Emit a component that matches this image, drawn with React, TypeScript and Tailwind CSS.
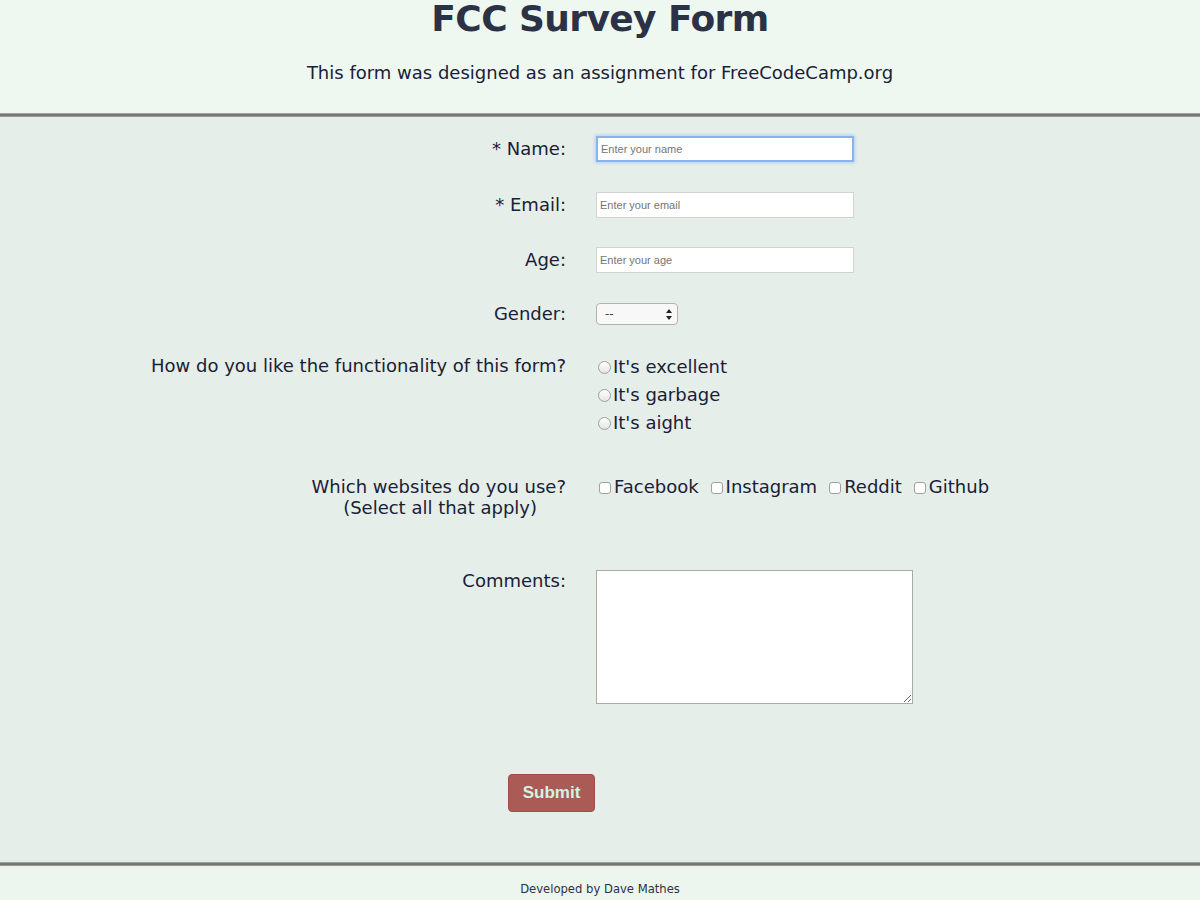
import React from "react";

const font = { fontFamily: '"DejaVu Sans", Verdana, sans-serif' };

function Row({ label, children, labelClass = "" }: { label: React.ReactNode; children: React.ReactNode; labelClass?: string }) {
  return (
    <div className="flex items-start">
      <div className={`w-[566px] shrink-0 text-right ${labelClass}`}>{label}</div>
      <div className="ml-[30px]">{children}</div>
    </div>
  );
}

function TextInput({ placeholder, focused }: { placeholder: string; focused?: boolean }) {
  return (
    <input
      type="text"
      placeholder={placeholder}
      className={
        "block h-[26px] w-[258px] bg-white px-[3px] text-[11px] text-[#333] placeholder:text-[#757575] outline-none " +
        (focused
          ? "border-2 border-[#8ab4ee] shadow-[0_0_3px_1px_#b3cff5]"
          : "border border-[#cfd3d1]")
      }
      style={{ fontFamily: '"Liberation Sans", Arial, sans-serif' }}
    />
  );
}

export default function App() {
  const sites = ["Facebook", "Instagram", "Reddit", "Github"];
  const opinions = ["It's excellent", "It's garbage", "It's aight"];

  return (
    <div className="min-h-[900px] bg-[#edf6ee] text-[#1b2036]" style={font}>
      {/* Header */}
      <header className="bg-[#eef8f0] pb-[28px] text-center">
        <h1 className="text-[36px] font-bold leading-[38px] tracking-[-0.6px] text-[#2b3245]">FCC Survey Form</h1>
        <p className="mt-[23px] text-[18px] leading-[24px]">
          This form was designed as an assignment for FreeCodeCamp.org
        </p>
      </header>
      <div className="h-[4px] bg-gradient-to-b from-[#b4b4b4] via-[#656565] to-[#a9a9a9]" />

      {/* Form */}
      <main className="bg-[#e5eee9] pt-[19px] pb-[50px] text-[18px]">
        <Row label="* Name:" labelClass="leading-[26px]">
          <TextInput placeholder="Enter your name" focused />
        </Row>
        <div className="mt-[30px]">
          <Row label="* Email:" labelClass="leading-[26px]">
            <TextInput placeholder="Enter your email" />
          </Row>
        </div>
        <div className="mt-[29px]">
          <Row label="Age:" labelClass="leading-[26px]">
            <TextInput placeholder="Enter your age" />
          </Row>
        </div>
        <div className="mt-[30px]">
          <Row label="Gender:" labelClass="leading-[22px]">
            <div className="relative flex h-[22px] w-[82px] items-center rounded-[4px] border border-[#b3b3b3] bg-[#f8f8f8] pl-[8px] text-[12px] text-[#444]">
              --
              <svg className="absolute right-[5px] top-[5px]" width="6" height="11" viewBox="0 0 6 11">
                <path d="M3 0 L6 4 L0 4 Z" fill="#222" />
                <path d="M0 7 L6 7 L3 11 Z" fill="#222" />
              </svg>
            </div>
          </Row>
        </div>
        <div className="mt-[27px]">
          <Row label="How do you like the functionality of this form?" labelClass="leading-[28px]">
            <div className="ml-[2px]">
              {opinions.map((o) => (
                <label key={o} className="flex h-[28px] items-center">
                  <input
                    type="radio"
                    name="opinion"
                    className="mt-[3px] h-[13px] w-[13px] appearance-none rounded-full border border-[#a0a0a0] bg-gradient-to-b from-white to-[#e4e4e4]"
                  />
                  <span className="ml-[2px]">{o}</span>
                </label>
              ))}
            </div>
          </Row>
        </div>
        <div className="mt-[40px]">
          <Row
            label={
              <div className="leading-[21px]">
                Which websites do you use?
                <div className="pr-[29px]">(Select all that apply)</div>
              </div>
            }
          >
            <div className="ml-[3px] flex h-[21px] items-center">
              {sites.map((s) => (
                <label key={s} className="mr-[12px] flex items-center">
                  <input
                    type="checkbox"
                    className="mt-[3px] h-[12px] w-[12px] appearance-none rounded-[3px] border border-[#a0a0a0] bg-white"
                  />
                  <span className="ml-[3px]">{s}</span>
                </label>
              ))}
            </div>
          </Row>
        </div>
        <div className="mt-[52px]">
          <Row label="Comments:" labelClass="leading-[22px]">
            <textarea className="block h-[134px] w-[317px] resize border border-[#a9a9a9] bg-white outline-none" />
          </Row>
        </div>
        <div className="mt-[70px] pl-[508px]">
          <button
            className="h-[38px] w-[87px] rounded-[4px] border border-[#9c4f4a] bg-[#ab5b56] text-[17px] font-bold text-[#d3f3e4]"
            style={{ fontFamily: '"Liberation Sans", Arial, sans-serif' }}
          >
            Submit
          </button>
        </div>
      </main>
      <div className="h-[4px] bg-gradient-to-b from-[#b4b4b4] via-[#656565] to-[#a9a9a9]" />

      {/* Footer */}
      <footer className="pt-[16px] pb-[16px] text-center text-[11.6px] leading-[14px] text-[#2b3245]">
        Developed by Dave Mathes
      </footer>
    </div>
  );
}
